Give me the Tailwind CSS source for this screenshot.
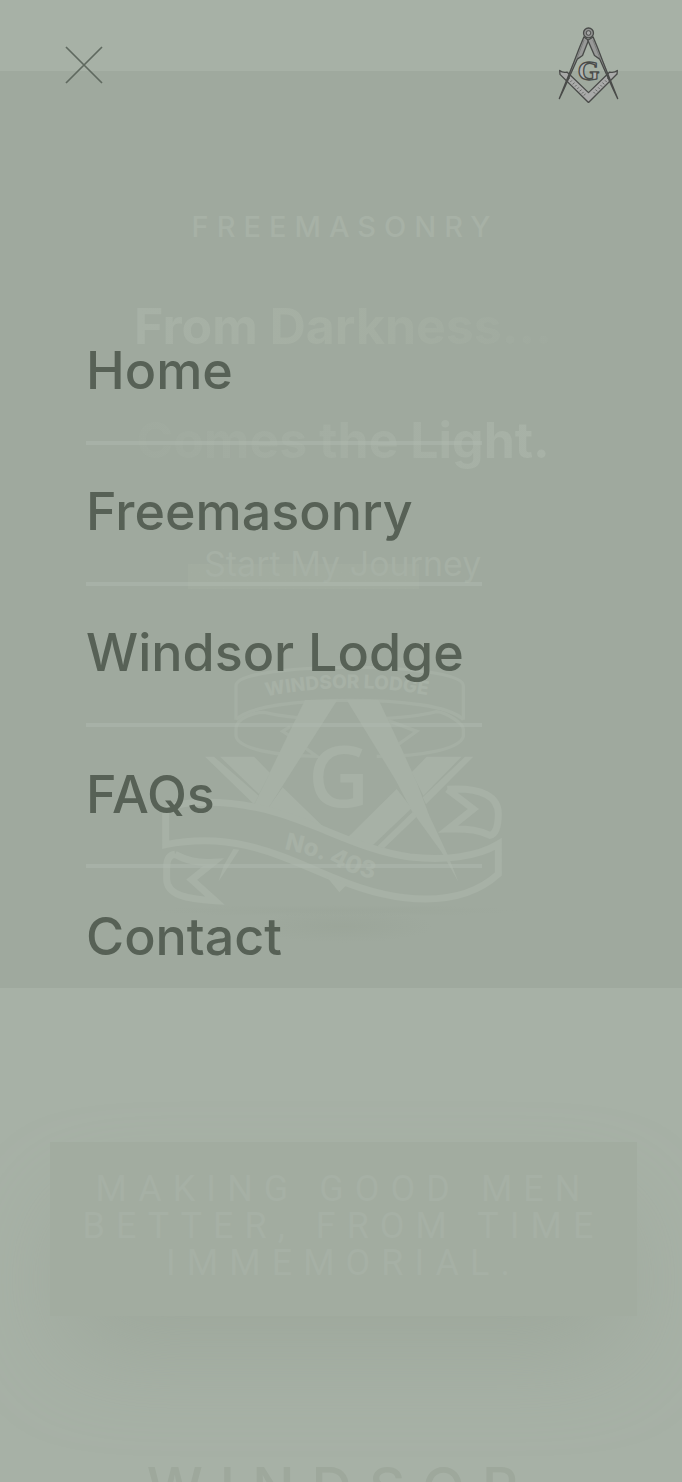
<!DOCTYPE html>
<html lang="en">
<head>
<meta charset="utf-8">
<meta name="viewport" content="width=device-width, initial-scale=1">
<title>Windsor Lodge No. 403</title>
<script src="https://cdn.jsdelivr.net/npm/@tailwindcss/browser@4"></script>
</head>
<body class="relative h-screen overflow-hidden bg-[#a7b1a6] font-['Inter',sans-serif] text-[#a7b1a6]">

<!-- Page behind the menu -->
<main>
  <div class="h-[71px]"></div>
  <section class="flex h-[917px] flex-col items-center bg-[#9fa99e]">
    <p class="mt-[136px] pl-2 text-[29px] leading-10 font-medium tracking-[8px] text-[#a7b1a6]">FREEMASONRY</p>
    <h1 class="mt-[47px] flex flex-col items-center gap-[50px] pl-1 text-[50px] leading-16 font-bold">
      <span class="bg-linear-to-r from-[#a7b1a6] via-[#a5afa3] to-[#a0aa9f] bg-clip-text text-transparent">From Darkness...</span>
      <span class="bg-linear-to-r from-[#a0aa9f] via-[#a4aea3] to-[#a8b2a7] bg-clip-text text-transparent">Comes the Light.</span>
    </h1>
    <div class="mt-[67px] w-[306px]">
      <a href="#journey" class="block h-[50px] w-[231px] bg-linear-to-b from-transparent from-50% to-[#a2aca0] to-50% pl-4 text-[34px] leading-[50px] whitespace-nowrap text-[#a6b0a5]">Start My Journey</a>
    </div>
    <svg class="mt-[60px] mr-3 w-[370px]" viewBox="0 0 1110 930" fill="#a7b1a6" font-family="Inter, sans-serif" role="img" aria-label="Windsor Lodge No. 403 emblem">
      <defs>
        <path id="arc" d="M349 143Q600 92 855 143"/>
        <path id="wave" d="M402 600Q500 622 560 652T700 696"/>
        <radialGradient id="shade"><stop offset="0" stop-color="#9aa498"/><stop offset="1" stop-color="#9aa498" stop-opacity="0"/></radialGradient>
      </defs>
      <ellipse cx="580" cy="832" rx="270" ry="50" fill="url(#shade)" opacity=".7"/>
      <ellipse cx="560" cy="785" rx="550" ry="18" fill="url(#shade)" opacity=".5"/>
      <g fill="none" stroke="#a5afa4" stroke-width="10">
        <path d="M258 212V110C258 75 420 55 600 55S940 75 940 110V212"/>
        <path d="M258 212C300 170 450 154 600 154S900 170 940 212"/>
        <path d="M510 210C440 208 400 203 342 190C318 190 258 205 258 240V260C262 300 380 320 500 322L462 294"/>
        <path d="M665 210C740 208 800 203 860 188C890 190 940 225 940 240V262C930 300 820 322 680 322"/>
        <path d="M420 233L398 247L418 260M715 215L800 247L740 290"/>
      </g>
      <path d="M465 153H562L350 485L312 468Z"/>
      <path d="M590 153H686L755 300L800 400L838 500L895 622L925 698L875 610L785 485L738 395Z"/>
      <path d="M165 323H192L326 440L312 466ZM210 323H312L360 372L327 435ZM398 415L530 543L600 570L350 484Z"/>
      <path d="M830 323H935L820 440L785 370ZM945 323H970L828 466L818 445ZM740 420L785 478L665 592L595 563ZM790 487L800 503L702 598L682 592Z"/>
      <path d="M250 600L268 602L205 698L222 648Z"/>
      <g fill="none" stroke="#a7b1a6" stroke-width="21">
        <path d="M47 490V587C260 545 400 625 560 690C740 765 930 780 1045 675V585C980 625 880 635 780 624C570 595 430 460 170 460C110 460 47 470 47 490"/>
        <path d="M892 421C1000 415 1045 445 1045 495C1045 535 1035 556 1020 559C990 545 960 538 895 540L970 480L892 421"/>
        <path d="M75 616C58 618 50 632 50 655V690C50 738 110 750 195 755L125 692L190 640C140 643 110 634 75 616"/>
      </g>
      <path d="M530 683L602 708L586 712L568 730Z"/>
      <text x="566" y="474" text-anchor="middle" font-family="'Open Sans', sans-serif" font-size="254" font-weight="600">G</text>
      <text font-size="57" font-weight="800"><textPath href="#arc">WINDSOR LODGE</textPath></text>
      <text font-size="72" font-weight="800"><textPath href="#wave">No. 403</textPath></text>
    </svg>
  </section>
  <section class="pt-[154px]">
    <p class="mr-[45px] ml-[50px] h-[174px] bg-[#a2aca0] pt-[29px] text-center font-['Roboto'] text-[36px] leading-[37px] tracking-[11px] text-[#a6b0a5] shadow-[0_50px_100px_-20px_#9da79b]">MAKING GOOD MEN BETTER, FROM TIME IMMEMORIAL.</p>
    <h2 class="mt-[138px] text-center text-[56px] leading-[68px] font-medium tracking-[17px] text-[#9ea89c]">WINDSOR</h2>
  </section>
</main>

<!-- Full-screen menu -->
<div class="absolute inset-0">
  <header class="flex h-[130px] items-center justify-between pr-[63px] pl-[65px]">
    <button type="button" aria-label="Close menu" class="size-[38px]">
      <svg viewBox="0 0 38 38" class="size-full" stroke="#5f695f" stroke-width="1.7"><path d="M1 1L37 37M37 1L1 37"/></svg>
    </button>
    <a href="#home" aria-label="Windsor Lodge home">
      <svg class="w-[61px]" viewBox="84 48 184 232" stroke="#494b49" stroke-width="4" stroke-linejoin="round">
        <path d="M89 179Q98 187 111 184L176 246L240 184Q254 187 263 179L262 190L176 276L90 191Z" fill="#a9aaa9"/>
        <path d="M114 207l6-5m1 12l5-5m2 12l6-5m1 12l5-5m2 12l5-5m2 12l6-5m1 12l5-5m1 11l5-6M238 207l-6-5m-1 12l-5-5m-2 12l-6-5m-1 12l-5-5m-2 12l-5-5m-2 12l-6-5m-1 12l-5-5" fill="none" stroke-width="2"/>
        <path d="M162 78L148 112L133 151L88 264L102 235L142 145L158 134L176 88Z" fill="#989998"/>
        <path d="M190 78L204 112L219 151L264 264L250 235L210 145L194 134L174 88Z" fill="#989998"/>
        <path d="M163 87L141 143M189 87L211 143" stroke-width="2" stroke="#6e706e"/>
        <circle cx="176" cy="66" r="15" fill="#929392"/>
        <circle cx="176" cy="66" r="7" fill="#a5a6a5" stroke-width="3"/>
        <text x="176" y="207" text-anchor="middle" font-family="'Liberation Serif', serif" font-weight="700" font-size="84" fill="#b2b3b2" stroke-width="4">G</text>
      </svg>
    </a>
  </header>
  <nav aria-label="Main" class="mt-[173px] pl-[86px]">
    <ul class="w-[396px] max-w-full text-[52px] leading-[76px] font-medium text-[#576156]">
      <li class="h-[142px] border-b-4 border-[#b0baaf]/50 pt-[30px]"><a href="#home">Home</a></li>
      <li class="h-[141px] border-b-4 border-[#b0baaf]/50 pt-[29px]"><a href="#freemasonry">Freemasonry</a></li>
      <li class="h-[141px] border-b-4 border-[#b0baaf]/50 pt-[29px]"><a href="#lodge" class="whitespace-nowrap">Windsor Lodge</a></li>
      <li class="h-[141px] border-b-4 border-[#b0baaf]/50 pt-[30px]"><a href="#faqs">FAQs</a></li>
      <li class="h-[141px] pt-[31px]"><a href="#contact">Contact</a></li>
    </ul>
  </nav>
</div>
</body>
</html>
